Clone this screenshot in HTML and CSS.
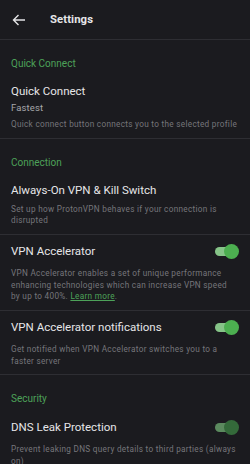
FILE: index.html
```html
<!DOCTYPE html>
<html>
<head>
<meta charset="utf-8">
<link rel="stylesheet" href="styles.css">
</head>
<body>
<div class="app">
  <header class="topbar">
    <svg class="back" width="14" height="12" viewBox="0 0 14 12"><path d="M13 6H1.5M6.5 1L1.5 6l5 5" fill="none" stroke="#e4e4e6" stroke-width="1.4"/></svg>
    <div class="title">Settings</div>
  </header>

  <section class="section">
    <div class="label">Quick Connect</div>
    <div class="item first">
      <div class="row"><div class="name">Quick Connect</div></div>
      <div class="sub">Fastest</div>
      <div class="desc">Quick connect button connects you to the selected profile</div>
    </div>
  </section>

  <section class="section">
    <div class="label">Connection</div>
    <div class="item first">
      <div class="row"><div class="name">Always-On VPN &amp; Kill Switch</div></div>
      <div class="desc">Set up how ProtonVPN behaves if your connection is disrupted</div>
    </div>
    <div class="item">
      <div class="row tall"><div class="name">VPN Accelerator</div><span class="toggle"></span></div>
      <div class="desc dt narrow">VPN Accelerator enables a set of unique performance enhancing technologies which can increase VPN speed by up to 400%. <a class="link">Learn more</a>.</div>
    </div>
    <div class="item">
      <div class="row tall"><div class="name">VPN Accelerator notifications</div><span class="toggle"></span></div>
      <div class="desc dt">Get notified when VPN Accelerator switches you to a faster server</div>
    </div>
  </section>

  <section class="section">
    <div class="label">Security</div>
    <div class="item first">
      <div class="row tall"><div class="name">DNS Leak Protection</div><span class="toggle off"></span></div>
      <div class="desc dt">Prevent leaking DNS query details to third parties (always on)</div>
    </div>
  </section>
</div>
</body>
</html>
```
FILE: styles.css
```css
html, body {
  margin: 0;
  padding: 0;
  background: #1b1b1f;
}
.app {
  width: 250px;
  height: 464px;
  overflow: hidden;
  font-family: Roboto, "Liberation Sans", sans-serif;
  color: #e6e6e8;
  background: #1b1b1f;
}
.topbar {
  height: 39px;
  display: flex;
  align-items: center;
  border-bottom: 1px solid #2e2e33;
  box-sizing: content-box;
}
.back {
  margin-left: 12px;
  margin-top: 1px;
}
.title {
  margin-left: 24px;
  font-size: 11.3px;
  font-weight: 700;
  letter-spacing: 0.1px;
}
.section {
  border-bottom: 1px solid #2e2e33;
}
.label {
  padding: 18px 11px 0;
  font-size: 10px;
  line-height: 12px;
  color: #4da259;
}
.item {
  padding: 8.5px 11.5px 7px 11px;
  border-top: 1px solid #2e2e33;
}
.item.first {
  border-top: none;
  padding-top: 14px;
}
.row {
  display: flex;
  align-items: center;
  justify-content: space-between;
  height: 14px;
}
.row.tall {
  height: 16px;
}
.name {
  font-size: 11.5px;
  line-height: 14px;
}
.sub {
  font-size: 9.5px;
  line-height: 12px;
  letter-spacing: 0.15px;
  color: #a6a6aa;
  margin-top: 4px;
}
.desc {
  margin-top: 7px;
  font-size: 8.2px;
  line-height: 11.5px;
  letter-spacing: 0.3px;
  color: #76767b;
}
.sub + .desc {
  margin-top: 5px;
}
.desc.dt {
  margin-top: 9px;
}
.desc.narrow {
  padding-right: 4px;
}
.link {
  color: #4da259;
  text-decoration: underline;
}
.toggle {
  position: relative;
  flex: none;
  width: 22px;
  height: 9px;
  border-radius: 5px;
  background: #86c488;
  margin-right: 1.5px;
}
.toggle::after {
  content: "";
  position: absolute;
  right: -2px;
  top: -3px;
  width: 15px;
  height: 15px;
  border-radius: 50%;
  background: #4caf50;
}
.toggle.off {
  background: #5b8a5e;
}
.toggle.off::after {
  background: #346a3a;
}
```
